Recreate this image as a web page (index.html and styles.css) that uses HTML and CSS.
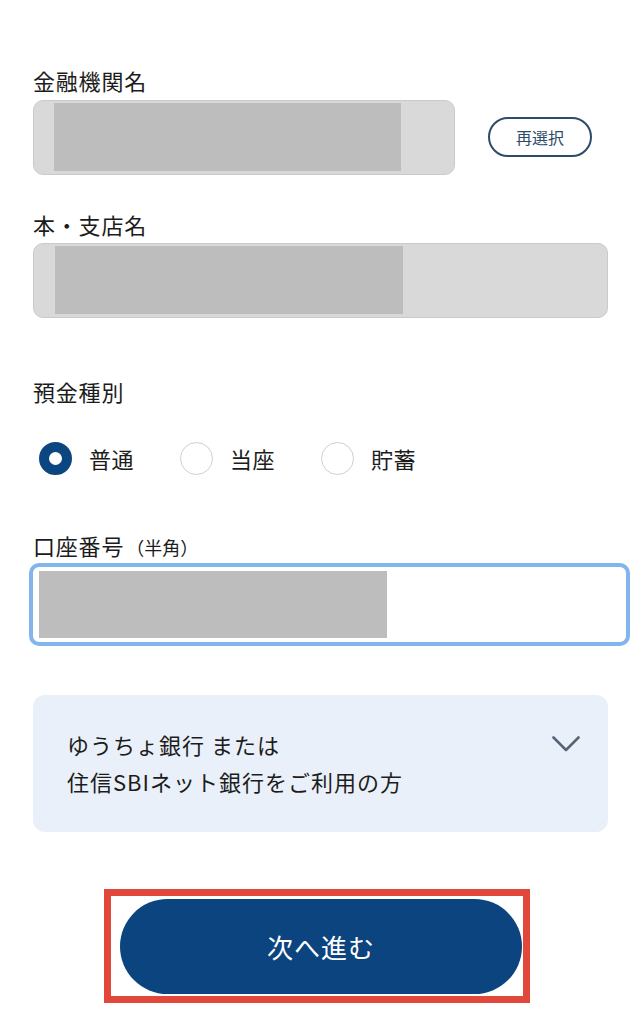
FILE: index.html
```html
<!DOCTYPE html>
<html lang="ja">
<head>
<meta charset="utf-8">
<title>口座登録</title>
<link rel="stylesheet" href="styles.css">
</head>
<body>
<main class="page">
  <section class="group group-bank">
    <div class="label">金融機関名</div>
    <div class="row">
      <div class="field field-disabled field-bank"><div class="redact"></div></div>
      <button class="reselect" type="button">再選択</button>
    </div>
  </section>

  <section class="group group-branch">
    <div class="label">本・支店名</div>
    <div class="field field-disabled"><div class="redact redact-branch"></div></div>
  </section>

  <section class="group group-type">
    <div class="label">預金種別</div>
    <div class="radios">
      <label class="radio-item"><span class="radio radio-on"></span><span class="radio-text">普通</span></label>
      <label class="radio-item"><span class="radio"></span><span class="radio-text">当座</span></label>
      <label class="radio-item"><span class="radio"></span><span class="radio-text">貯蓄</span></label>
    </div>
  </section>

  <section class="group group-number">
    <div class="label">口座番号<span class="label-sub">（半角）</span></div>
    <div class="field field-focus"><div class="redact redact-number"></div></div>
  </section>

  <section class="accordion">
    <div class="accordion-text">ゆうちょ銀行 または<br>住信SBIネット銀行をご利用の方</div>
    <svg class="chevron" width="28" height="16" viewBox="0 0 28 16" aria-hidden="true">
      <polyline points="1.5,1.5 14,14 26.5,1.5" fill="none" stroke="#556577" stroke-width="2.6" stroke-linecap="round" stroke-linejoin="round"/>
    </svg>
  </section>

  <div class="highlight">
    <button class="next" type="button">次へ進む</button>
  </div>
</main>
</body>
</html>
```

FILE: styles.css
```css
* { box-sizing: border-box; }

html, body {
  margin: 0;
  padding: 0;
  background: #ffffff;
}

body {
  font-family: "Noto Sans CJK JP", "Noto Sans", sans-serif;
  color: #1c1c1c;
  width: 641px;
  height: 1024px;
  overflow: hidden;
}

.page {
  padding: 65px 33px 0 33px;
}

.label {
  font-size: 22px;
  line-height: 30px;
  letter-spacing: 0.8px;
  margin-bottom: 5px;
}

.label-sub {
  font-size: 18px;
  letter-spacing: 0;
  margin-left: 2px;
}

.row {
  display: flex;
  align-items: center;
  gap: 33px;
}

.field {
  border-radius: 10px;
  height: 75px;
}

.field-disabled {
  background: #d9d9d9;
  border: 1px solid #cacaca;
  padding: 2px 20px;
}

.field-bank {
  width: 422px;
}

.redact {
  width: 347px;
  height: 68px;
  background: #bdbdbd;
}

.redact-branch {
  width: 348px;
  margin-left: 1px;
}

.reselect {
  width: 104px;
  height: 40px;
  border: 2px solid #2d4b6a;
  border-radius: 20px;
  background: #ffffff;
  color: #2d4b6a;
  font-family: "Noto Sans CJK JP", sans-serif;
  font-size: 16px;
  padding: 0;
  margin-top: -1px;
}

.group-branch {
  margin-top: 34px;
}

.group-branch .label {
  margin-bottom: 4px;
}

.group-type {
  margin-top: 58px;
}

.radios {
  display: flex;
  gap: 46px;
  margin-top: 35px;
  padding-left: 6px;
  height: 34px;
  align-items: center;
}

.radio-item {
  display: flex;
  align-items: center;
  gap: 17px;
}

.radio {
  width: 33px;
  height: 33px;
  border-radius: 50%;
  border: 1.5px solid #cfcfcf;
  background: #ffffff;
  display: block;
}

.radio-on {
  border: 10.5px solid #0b4680;
  background: #ffffff;
}

.radio-text {
  font-size: 22px;
  line-height: 30px;
  letter-spacing: 0.5px;
}

.group-number {
  margin-top: 55px;
}

.group-number .label {
  margin-bottom: 1px;
}

.field-focus {
  margin-left: -4px;
  width: 601px;
  height: 83px;
  border: 4px solid #82b4ee;
  background: #ffffff;
  padding: 4px 6px;
}

.redact-number {
  width: 348px;
  height: 67px;
}

.accordion {
  margin-top: 49px;
  height: 137px;
  background: #e9f0f9;
  border-radius: 12px;
  padding: 31px 28px 0 34px;
  display: flex;
  justify-content: space-between;
  align-items: flex-start;
}

.accordion-text {
  font-size: 22px;
  line-height: 37px;
  letter-spacing: 1px;
}

.chevron {
  margin-top: 10px;
  display: block;
}

.highlight {
  margin-top: 57px;
  margin-left: 71px;
  width: 426px;
  height: 114px;
  border: 7px solid #e2473b;
  padding: 3px 1px 1px 9px;
}

.next {
  display: block;
  width: 402px;
  height: 95px;
  border: none;
  border-radius: 48px;
  background: #0b447e;
  color: #ffffff;
  font-family: "Noto Sans CJK JP", sans-serif;
  font-size: 26px;
  letter-spacing: 1px;
  padding: 0;
}
```
